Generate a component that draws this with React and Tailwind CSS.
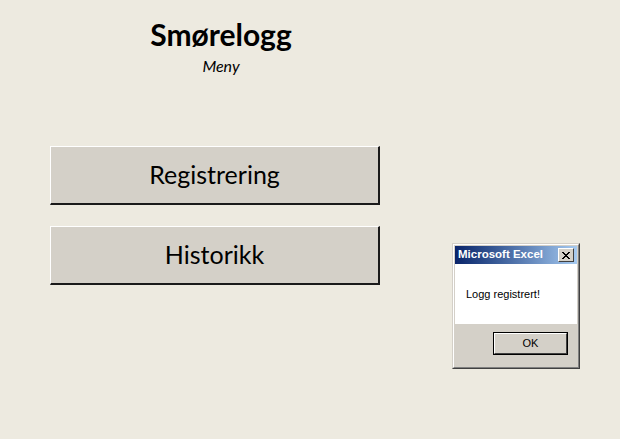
import React from "react";

const MenuButton = ({ label }) => {
  return (
    <div className="w-[330px] h-[59px] bg-[#d4d0c8] border-t border-l border-t-white border-l-white border-r-2 border-b-2 border-r-[#1a1a1a] border-b-[#1a1a1a] flex items-center justify-center">
      <span className="text-[25px] text-black" style={{ fontFamily: "Lato, 'Open Sans', sans-serif" }}>{label}</span>
    </div>
  );
};

const MessageBox = () => {
  return (
    <div className="absolute left-[452px] top-[243px] w-[128px] h-[126px] bg-[#d4d0c8] border border-t-[#d4d0c8] border-l-[#d4d0c8] border-r-[#404040] border-b-[#404040]">
      <div className="h-full border border-t-white border-l-white border-r-[#808080] border-b-[#808080] flex flex-col p-px">
        <div className="h-[18px] flex items-center justify-between pl-[3px] pr-[3px] bg-gradient-to-r from-[#0a246a] to-[#a6caf0]">
          <span className="text-white font-bold text-[11.5px]" style={{ fontFamily: "'Liberation Sans', Arial, sans-serif" }}>Microsoft Excel</span>
          <div className="w-[16px] h-[14px] bg-[#d4d0c8] border border-t-white border-l-white border-r-[#404040] border-b-[#404040] flex items-center justify-center">
            <svg width="8" height="7" viewBox="0 0 8 7">
              <path d="M0 0 L7 7 M1 0 L8 7 M7 0 L0 7 M8 0 L1 7" stroke="black" strokeWidth="1" shapeRendering="crispEdges" />
            </svg>
          </div>
        </div>
        <div className="bg-white h-[60px] flex items-center pl-[11px]">
          <span className="text-[11px] text-black" style={{ fontFamily: "'Liberation Sans', Arial, sans-serif" }}>Logg registrert!</span>
        </div>
        <div className="flex-1 flex items-start justify-end pr-[9px] pt-[8px]">
          <div className="w-[75px] h-[23px] border border-black">
            <div className="h-full bg-[#d4d0c8] border border-t-white border-l-white border-r-[#404040] border-b-[#404040] flex items-center justify-center">
              <span className="text-[11px] text-black" style={{ fontFamily: "'Liberation Sans', Arial, sans-serif" }}>OK</span>
            </div>
          </div>
        </div>
      </div>
    </div>
  );
};

const App = () => {
  return (
    <div className="relative w-[620px] h-[439px] bg-[#edeae0] overflow-hidden">
      <div className="flex flex-col w-[342px] ml-[50px]">
        <div className="flex flex-col items-center pt-[19px]">
          <span className="text-[30px] font-bold leading-none text-black" style={{ fontFamily: "Lato, 'Open Sans', sans-serif" }}>Smørelogg</span>
          <span className="text-[16px] italic leading-none mt-[9px] text-black" style={{ fontFamily: "Lato, 'Open Sans', sans-serif" }}>Meny</span>
        </div>
        <div className="flex flex-col gap-[21px] mt-[72px]">
          <MenuButton label="Registrering" />
          <MenuButton label="Historikk" />
        </div>
      </div>
      <MessageBox />
    </div>
  );
};

export default App;
